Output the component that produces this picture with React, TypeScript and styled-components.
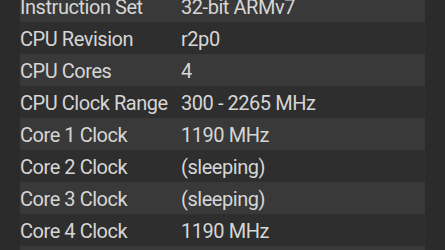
import styled, { createGlobalStyle } from 'styled-components';

const GlobalStyle = createGlobalStyle`
  html, body {
    margin: 0;
    padding: 0;
    background: #2b2b2b;
    overflow: hidden;
  }
`;

const Screen = styled.div`
  width: 445px;
  height: 250px;
  overflow: hidden;
  background: #2b2b2b;
  font-family: Roboto, "Noto Sans", sans-serif;
`;

const Table = styled.div`
  margin: -10px 20px 0 20px;
  display: flex;
  flex-direction: column;
`;

const Row = styled.div<{ $shaded: boolean }>`
  display: grid;
  grid-template-columns: 161px 1fr;
  align-items: center;
  box-sizing: border-box;
  height: 32px;
  padding-top: 1px;
  background: ${(p) => (p.$shaded ? '#393939' : '#2e2e2e')};
  color: #d6d6d6;
  font-size: 20px;
  letter-spacing: -0.45px;
  line-height: 1;
`;

const Cell = styled.span`
  white-space: nowrap;
`;

const specs: [string, string][] = [
  ['Instruction Set', '32-bit ARMv7'],
  ['CPU Revision', 'r2p0'],
  ['CPU Cores', '4'],
  ['CPU Clock Range', '300 - 2265 MHz'],
  ['Core 1 Clock', '1190 MHz'],
  ['Core 2 Clock', '(sleeping)'],
  ['Core 3 Clock', '(sleeping)'],
  ['Core 4 Clock', '1190 MHz'],
  ['', ''],
];

export default function App() {
  return (
    <Screen>
      <GlobalStyle />
      <Table>
        {specs.map(([label, value], i) => (
          <Row key={i} $shaded={i % 2 === 0}>
            <Cell>{label}</Cell>
            <Cell>{value}</Cell>
          </Row>
        ))}
      </Table>
    </Screen>
  );
}
